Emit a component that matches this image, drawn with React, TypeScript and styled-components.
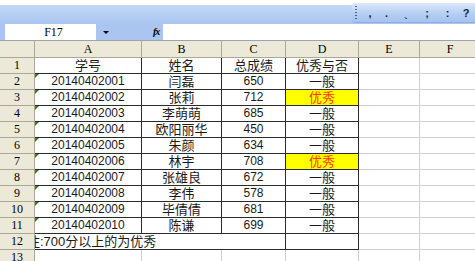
import React from "react";
import styled, { createGlobalStyle, css } from "styled-components";

const GlobalStyle = createGlobalStyle`
  html, body { margin: 0; padding: 0; background: #fff; overflow: hidden; }
  * { box-sizing: border-box; }
`;

const Page = styled.div`
  width: 475px;
  height: 261px;
  overflow: hidden;
  padding-top: 5px;
  background: #fff;
`;

const TitleBar = styled.div`
  height: 19px;
  display: flex;
  background: linear-gradient(#c3d8f7, #a9c5f0);
`;

const BarFill = styled.div`
  flex: 1;
`;

const ImeBar = styled.div`
  width: 123px;
  margin-top: -2px;
  height: 19px;
  display: flex;
  align-items: center;
  border-radius: 3px 0 0 3px;
  background: linear-gradient(#dbe8fb, #b4cdf3 60%, #a6c3ef);
  box-shadow: 0 1px 0 #8fb0e4;
  font-family: "Liberation Sans", sans-serif;
  font-weight: bold;
  font-size: 11px;
  color: #1a1a3a;
`;

const Grip = styled.div`
  width: 2px;
  height: 13px;
  margin: 0 6px 0 3px;
  background: repeating-linear-gradient(#46618f 0 1px, transparent 1px 3px);
`;

const Glyph = styled.span<{ $w: number }>`
  width: ${(p) => p.$w}px;
  text-align: center;
  line-height: 12px;
`;

const FormulaRow = styled.div`
  height: 16px;
  display: flex;
  align-items: stretch;
  background: #a9c5f0;
`;

const NameBox = styled.div`
  width: 91px;
  margin-left: 5px;
  background: #fff;
  font-family: "Liberation Serif", serif;
  font-size: 12px;
  line-height: 16px;
  text-align: center;
  color: #000;
  padding-left: 6px;
`;

const DropArrow = styled.div`
  width: 20px;
  display: flex;
  align-items: center;
  justify-content: center;
  &::after {
    content: "";
    border-left: 3px solid transparent;
    border-right: 3px solid transparent;
    border-top: 3px solid #000;
  }
`;

const FxLabel = styled.div`
  width: 47px;
  padding-left: 37px;
  font-family: "Liberation Serif", serif;
  font-style: italic;
  font-weight: bold;
  font-size: 10px;
  line-height: 16px;
  color: #000;
  letter-spacing: -1px;
`;

const FormulaInput = styled.div`
  flex: 1;
  background: #fff;
`;

const Sheet = styled.div`
  display: grid;
  grid-template-columns: 35px 107px 80px 64px 73px 61px 61px;
  grid-template-rows: 17px;
  grid-auto-rows: 16px;
  border-top: 1px solid #9ea3ab;
`;

const HeadBase = css`
  background: #ece9d8;
  border-right: 1px solid #aca899;
  border-bottom: 1px solid #aca899;
  font-family: "Liberation Serif", serif;
  font-size: 12px;
  color: #000;
  display: flex;
  align-items: center;
  justify-content: center;
`;

const ColHead = styled.div`
  ${HeadBase}
`;

const RowHead = styled.div`
  ${HeadBase}
`;

const Cell = styled.div<{ $dark?: boolean; $hl?: boolean; $cjk?: boolean; $span?: number }>`
  position: relative;
  overflow: hidden;
  white-space: nowrap;
  display: flex;
  align-items: center;
  justify-content: center;
  border-right: 1px solid ${(p) => (p.$dark ? "#2b2b2b" : "#d0d0d0")};
  border-bottom: 1px solid ${(p) => (p.$dark ? "#2b2b2b" : "#d0d0d0")};
  background: ${(p) => (p.$hl ? "#ffff00" : "#fff")};
  color: ${(p) => (p.$hl ? "#ff3a00" : "#1a1a1a")};
  font-family: "Liberation Sans", "Noto Sans CJK SC", sans-serif;
  font-size: ${(p) => (p.$cjk ? 13 : 12)}px;
  line-height: 15px;
  ${(p) => (p.$span ? `grid-column: span ${p.$span};` : "")}
`;

const NoteCell = styled(Cell)`
  justify-content: flex-start;
  font-size: 13px;
`;

const NoteText = styled.span`
  margin-left: -8px;
`;

const TextFlag = styled.span`
  position: absolute;
  left: 0;
  top: 0;
  width: 0;
  height: 0;
  border-top: 4px solid #1f8a1f;
  border-right: 4px solid transparent;
`;

type Row = [string, string, string, string];

const rows: Row[] = [
  ["20140402001", "闫磊", "650", "一般"],
  ["20140402002", "张莉", "712", "优秀"],
  ["20140402003", "李萌萌", "685", "一般"],
  ["20140402004", "欧阳丽华", "450", "一般"],
  ["20140402005", "朱颜", "634", "一般"],
  ["20140402006", "林宇", "708", "优秀"],
  ["20140402007", "张雄良", "672", "一般"],
  ["20140402008", "李伟", "578", "一般"],
  ["20140402009", "毕倩倩", "681", "一般"],
  ["20140402010", "陈谦", "699", "一般"],
];

export default function App() {
  return (
    <>
      <GlobalStyle />
      <Page>
        <TitleBar>
          <BarFill />
          <ImeBar>
            <Grip />
            <Glyph $w={14}>,</Glyph>
            <Glyph $w={19}>.</Glyph>
            <Glyph $w={20}>ˎ</Glyph>
            <Glyph $w={22}>;</Glyph>
            <Glyph $w={19}>:</Glyph>
            <Glyph $w={18}>?</Glyph>
          </ImeBar>
        </TitleBar>
        <FormulaRow>
          <NameBox>F17</NameBox>
          <DropArrow />
          <FxLabel>fx</FxLabel>
          <FormulaInput />
        </FormulaRow>
        <Sheet>
          <ColHead />
          {["A", "B", "C", "D", "E", "F"].map((c) => (
            <ColHead key={c}>{c}</ColHead>
          ))}

          <RowHead>1</RowHead>
          <Cell $dark $cjk>学号</Cell>
          <Cell $dark $cjk>姓名</Cell>
          <Cell $dark $cjk>总成绩</Cell>
          <Cell $dark $cjk>优秀与否</Cell>
          <Cell />
          <Cell />

          {rows.map((r, i) => (
            <React.Fragment key={r[0]}>
              <RowHead>{i + 2}</RowHead>
              <Cell $dark>
                <TextFlag />
                {r[0]}
              </Cell>
              <Cell $dark $cjk>{r[1]}</Cell>
              <Cell $dark>{r[2]}</Cell>
              <Cell $dark $cjk $hl={r[3] === "优秀"}>{r[3]}</Cell>
              <Cell />
              <Cell />
            </React.Fragment>
          ))}

          <RowHead>12</RowHead>
          <NoteCell $dark $span={3}>
            <NoteText>注:700分以上的为优秀</NoteText>
          </NoteCell>
          <Cell $dark />
          <Cell />
          <Cell />

          <RowHead>13</RowHead>
          <Cell />
          <Cell />
          <Cell />
          <Cell />
          <Cell />
          <Cell />
        </Sheet>
      </Page>
    </>
  );
}
